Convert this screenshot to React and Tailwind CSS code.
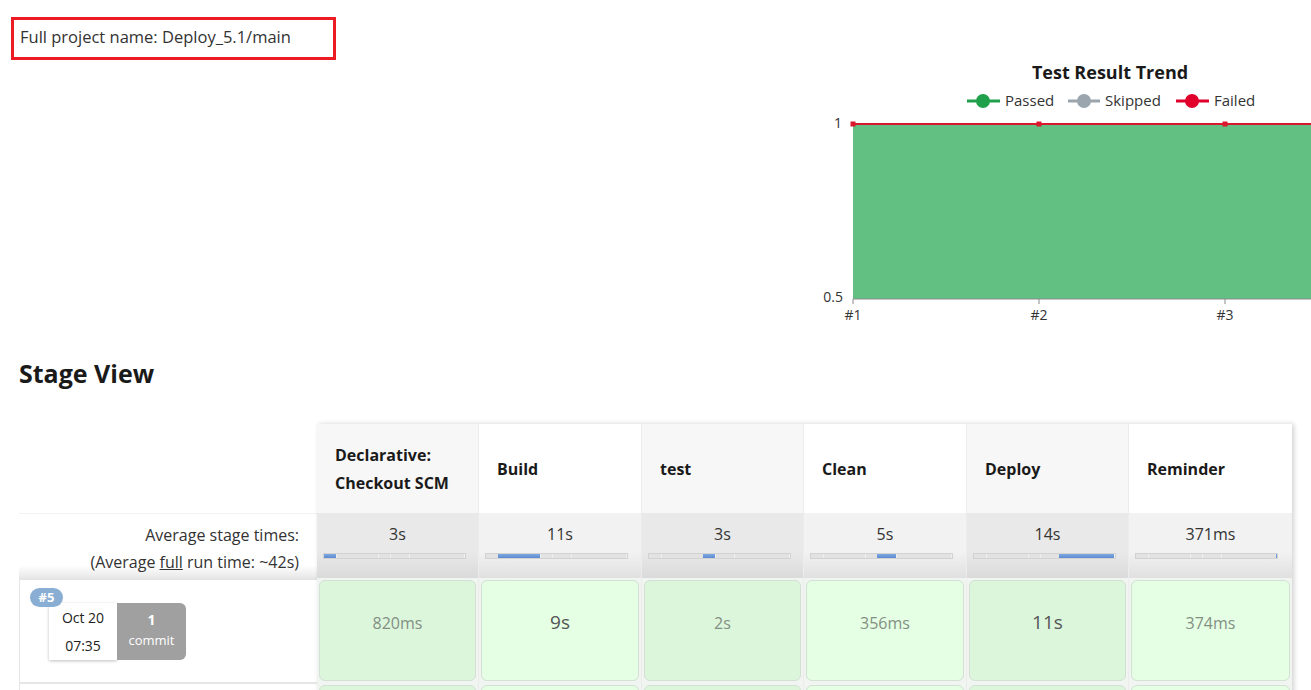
import React from 'react';

const stages = [
  { name: 'Declarative: Checkout SCM', avg: '3s', secs: 3, run: '820ms', big: false },
  { name: 'Build', avg: '11s', secs: 11, run: '9s', big: true },
  { name: 'test', avg: '3s', secs: 3, run: '2s', big: false },
  { name: 'Clean', avg: '5s', secs: 5, run: '356ms', big: false },
  { name: 'Deploy', avg: '14s', secs: 14, run: '11s', big: true },
  { name: 'Reminder', avg: '371ms', secs: 0.371, run: '374ms', big: false },
];

const total = stages.reduce((s, x) => s + x.secs, 0);

function TimeBar({ active }) {
  return (
    <div className="ml-[6px] mt-[9px] flex h-[6px] w-[143px] border border-[#d2d2d2] bg-[#e2e2e2]">
      {stages.map((s, i) => (
        <div
          key={i}
          style={{ width: `${(s.secs / total) * 100}%` }}
          className={
            i === active
              ? 'h-full bg-[linear-gradient(to_bottom,#7ea8e0,#5b8bd0)]'
              : 'h-full border-l border-[#f0f0f0] first:border-l-0'
          }
        />
      ))}
    </div>
  );
}

function Chart() {
  const font = { fontFamily: '"Open Sans", "Noto Sans", sans-serif' };
  return (
    <svg width="578" height="270" style={font} className="block">
      <text x="289" y="24" textAnchor="middle" fontSize="18" fontWeight="700" fill="#1a1a1a">
        Test Result Trend
      </text>
      <line x1="146" y1="46" x2="179" y2="46" stroke="#21a04b" strokeWidth="3" />
      <circle cx="162" cy="46" r="7" fill="#21a04b" />
      <text x="184" y="51" fontSize="15" fill="#333">Passed</text>
      <line x1="247" y1="46" x2="279" y2="46" stroke="#9aa5ad" strokeWidth="3" />
      <circle cx="263" cy="46" r="7" fill="#9aa5ad" />
      <text x="284" y="51" fontSize="15" fill="#333">Skipped</text>
      <line x1="355" y1="46" x2="388" y2="46" stroke="#e0002a" strokeWidth="3" />
      <circle cx="371" cy="46" r="7" fill="#e0002a" />
      <text x="393" y="51" fontSize="15" fill="#333">Failed</text>

      <rect x="32" y="69" width="560" height="175" fill="#61c082" />
      <line x1="32" y1="69" x2="578" y2="69" stroke="#d9182e" strokeWidth="2" />
      {[32, 218, 404].map((x) => (
        <rect key={x} x={x - 2.5} y="66.5" width="5" height="5" fill="#d9182e" />
      ))}
      <line x1="32" y1="244" x2="578" y2="244" stroke="#8c8c8c" strokeWidth="1" />
      {[32, 218, 404].map((x, i) => (
        <g key={x}>
          <line x1={x} y1="244" x2={x} y2="249" stroke="#8c8c8c" />
          <text x={x} y="265" textAnchor="middle" fontSize="14" fill="#333">#{i + 1}</text>
        </g>
      ))}
      <text x="21" y="73" textAnchor="end" fontSize="14" fill="#333">1</text>
      <text x="22" y="247" textAnchor="end" fontSize="14" fill="#333">0.5</text>
    </svg>
  );
}

export default function App() {
  return (
    <div
      className="h-[690px] w-[1311px] overflow-hidden bg-white text-[#1a1a1a]"
      style={{ fontFamily: '"Open Sans", "Noto Sans", sans-serif' }}
    >
      <div className="flex">
        <div className="ml-[11px] mt-[17px] h-[43px] w-[325px] shrink-0 whitespace-nowrap border-[3px] border-[#ed1c24] pl-[6px] pt-[5px] text-[16.5px] leading-[24px] text-[#333]">
          Full project name: Deploy_5.1/main
        </div>
        <div className="ml-[485px] mt-[55px] w-[578px] shrink-0">
          <Chart />
        </div>
      </div>

      <h2 className="ml-[19px] mt-[32px] text-[25px] font-bold leading-[32px] text-[#1a1a1a]">Stage View</h2>

      <div className="ml-[19px] mt-[35px] flex">
        <div className="w-[298px] shrink-0">
          <div className="h-[89px]" />
          <div className="h-[65px] border-t border-[#f2f2f2] bg-[linear-gradient(to_bottom,#ffffff_80%,#e8e8e8)] pr-[18px] pt-[8px] text-right text-[16px] leading-[27px] text-[#333]">
            <div>Average stage times:</div>
            <div>
              (Average <span className="underline">full</span> run time: ~42s)
            </div>
          </div>
          <div className="h-[2px] bg-[#e4e4e4]" />
          <div className="relative h-[103px] border-b border-l border-[#e6e6e6]">
            <div className="absolute left-[10px] top-[8px] z-10 flex h-[19px] w-[33px] items-center justify-center rounded-full bg-[#8aaed3] text-[13px] font-bold text-white">
              #5
            </div>
            <div className="absolute left-[29px] top-[23px] flex h-[57px]">
              <div className="flex w-[68px] flex-col items-center justify-center bg-white text-[14px] leading-[28px] text-[#222] shadow-[0_1px_3px_rgba(0,0,0,0.25)]">
                <div>Oct 20</div>
                <div>07:35</div>
              </div>
              <div className="flex w-[69px] flex-col items-center justify-center rounded-r-[6px] bg-[#a0a0a0] pb-[3px] text-white">
                <div className="text-[14px] font-bold leading-[20px]">1</div>
                <div className="text-[13px] leading-[20px]">commit</div>
              </div>
            </div>
          </div>
          <div className="h-[40px] border-l border-t border-[#e6e6e6]" />
        </div>

        <div className="flex shadow-[2px_0_5px_rgba(0,0,0,0.18)]">
          {stages.map((s, i) => {
            const odd = i % 2 === 0;
            return (
              <div
                key={s.name}
                className={`${i % 2 === 0 ? 'w-[162px]' : 'w-[163px]'} shrink-0 border-r border-[#ececec] last:border-r-0`}
              >
                <div
                  className={`flex h-[89px] items-center pl-[18px] pr-[8px] text-[16px] font-bold leading-[28px] ${odd ? 'bg-[#f7f7f7]' : 'bg-white'}`}
                >
                  {s.name === 'Declarative: Checkout SCM' ? (
                    <div>
                      Declarative:
                      <br />
                      Checkout SCM
                    </div>
                  ) : (
                    s.name
                  )}
                </div>
                <div
                  className={`h-[65px] pt-[11px] ${odd ? 'bg-[linear-gradient(to_bottom,#e9e9e9_60%,#dadada)]' : 'bg-[linear-gradient(to_bottom,#f2f2f2_60%,#e0e0e0)]'}`}
                >
                  <div className="text-center text-[16px] leading-[20px] text-[#333]">{s.avg}</div>
                  <TimeBar active={i} />
                </div>
                <div className="bg-[#f1f5f1] p-[2px]">
                  <div
                    className={`flex h-[101px] items-center justify-center rounded-[6px] border border-[#d3e0d3] pb-[16px] ${odd ? 'bg-[#dcf6dc]' : 'bg-[#e4ffe4]'} ${s.big ? 'text-[19px] text-[#555]' : 'text-[16px] text-[#838f83]'}`}
                  >
                    {s.run}
                  </div>
                </div>
                <div className="bg-[#f1f5f1] p-[2px]">
                  <div
                    className={`h-[101px] rounded-[6px] border border-[#d3e0d3] ${odd ? 'bg-[#dcf6dc]' : 'bg-[#e4ffe4]'}`}
                  />
                </div>
              </div>
            );
          })}
        </div>
      </div>
    </div>
  );
}
